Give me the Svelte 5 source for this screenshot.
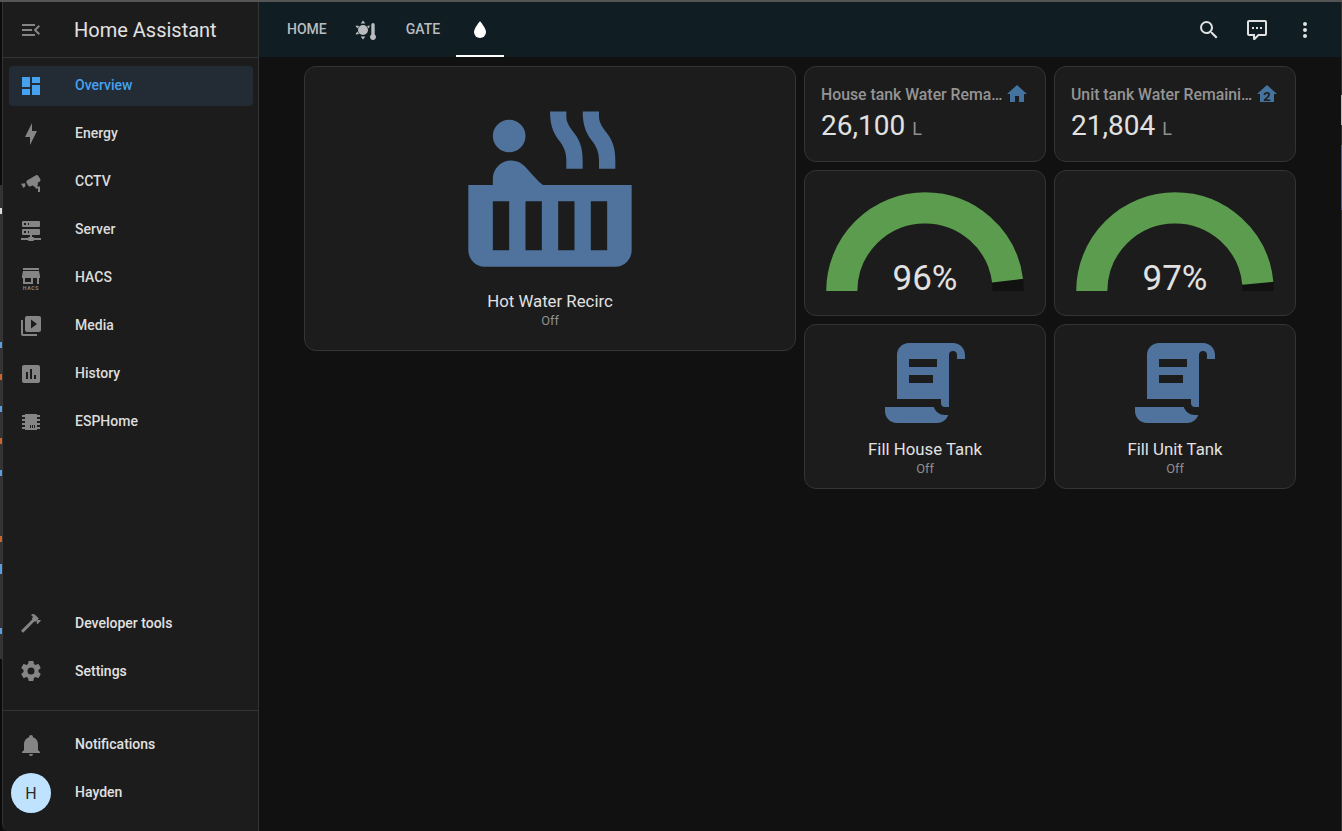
<script lang="ts">
	const icons: Record<string, string> = {
		menuOpen: "M21,15.61L19.59,17L14.58,12L19.59,7L21,8.39L17.44,12L21,15.61M3,6H16V8H3V6M3,13V11H13V13H3M3,18V16H16V18H3Z",
		dashboard: "M13,3V9H21V3M13,21H21V11H13M3,21H11V15H3M3,13H11V3H3V13Z",
		bolt: "M11 15H6L13 1V9H18L11 23V15Z",
		cctv: "M18.15,4.94C17.77,4.91 17.37,5 17,5.2L8.35,10.2C7.39,10.76 7.07,12 7.62,12.94L9.12,15.54C9.67,16.5 10.89,16.82 11.85,16.27L13.65,15.23C13.92,15.71 14.32,16.11 14.81,16.38C15.28,16.65 15.81,16.8 16.35,16.8V18.5H19V22H21V16.5H18.35V15.65C19,14.85 19.12,13.7 18.67,12.77L20.47,11.73C21.43,11.17 21.75,9.95 21.2,9L19.7,6.4C19.3,5.71 18.6,5 18.15,4.94M6.22,13.17L2,13.71L2.75,15L4.5,18L6.35,16.27L6.22,13.17Z",
		server: "M13,19H14A1,1 0 0,1 15,20H22V22H15A1,1 0 0,1 14,23H10A1,1 0 0,1 9,22H2V20H9A1,1 0 0,1 10,19H11V17H4A1,1 0 0,1 3,16V12A1,1 0 0,1 4,11H20A1,1 0 0,1 21,12V16A1,1 0 0,1 20,17H13V19M4,3H20A1,1 0 0,1 21,4V8A1,1 0 0,1 20,9H4A1,1 0 0,1 3,8V4A1,1 0 0,1 4,3M9,7H10V5H9V7M9,15H10V13H9V15M5,5V7H7V5H5M5,13V15H7V13H5Z",
		media: "M4,6H2V20A2,2 0 0,0 4,22H18V20H4V6M22,4A2,2 0 0,0 20,2H8A2,2 0 0,0 6,4V16A2,2 0 0,0 8,18H20A2,2 0 0,0 22,16V4M12,14.5V5.5L18,10L12,14.5Z",
		chart: "M19 3H5C3.9 3 3 3.9 3 5V19C3 20.1 3.9 21 5 21H19C20.1 21 21 20.1 21 19V5C21 3.9 20.1 3 19 3M9 17H7V10H9V17M13 17H11V7H13V17M17 17H15V13H17V17Z",
		chip: "M6,4H18V5H21V7H18V9H21V11H18V13H21V15H18V17H21V19H18V20H6V19H3V17H6V15H3V13H6V11H3V9H6V7H3V5H6V4M11,15V18H12V15H11M13,15V18H14V15H13M15,15V18H16V15H15Z",
		hammer: "M2 19.63L13.43 8.2L12.72 7.5L14.14 6.07L12 3.89C13.2 2.7 15.09 2.7 16.27 3.89L19.87 7.5L18.45 8.91H21.29L22 9.62L18.45 13.21L17.74 12.5V9.62L16.27 11.04L15.56 10.33L4.13 21.76L2 19.63Z",
		cog: "M12,15.5A3.5,3.5 0 0,1 8.5,12A3.5,3.5 0 0,1 12,8.5A3.5,3.5 0 0,1 15.5,12A3.5,3.5 0 0,1 12,15.5M19.43,12.97C19.47,12.65 19.5,12.33 19.5,12C19.5,11.67 19.47,11.34 19.43,11L21.54,9.37C21.73,9.22 21.78,8.95 21.66,8.73L19.66,5.27C19.54,5.05 19.27,4.96 19.05,5.05L16.56,6.05C16.04,5.66 15.5,5.32 14.87,5.07L14.5,2.42C14.46,2.18 14.25,2 14,2H10C9.75,2 9.54,2.18 9.5,2.42L9.13,5.07C8.5,5.32 7.96,5.66 7.44,6.05L4.95,5.05C4.73,4.96 4.46,5.05 4.34,5.27L2.34,8.73C2.21,8.95 2.27,9.22 2.46,9.37L4.57,11C4.53,11.34 4.5,11.67 4.5,12C4.5,12.33 4.53,12.65 4.57,12.97L2.46,14.63C2.27,14.78 2.21,15.05 2.34,15.27L4.34,18.73C4.46,18.95 4.73,19.03 4.95,18.95L7.44,17.94C7.96,18.34 8.5,18.68 9.13,18.93L9.5,21.58C9.54,21.82 9.75,22 10,22H14C14.25,22 14.46,21.82 14.5,21.58L14.87,18.93C15.5,18.67 16.04,18.34 16.56,17.94L19.05,18.95C19.27,19.03 19.54,18.95 19.66,18.73L21.66,15.27C21.78,15.05 21.73,14.78 21.54,14.63L19.43,12.97Z",
		bell: "M21,19V20H3V19L5,17V11C5,7.9 7.03,5.17 10,4.29C10,4.19 10,4.1 10,4A2,2 0 0,1 12,2A2,2 0 0,1 14,4C14,4.1 14,4.19 14,4.29C16.97,5.17 19,7.9 19,11V17L21,19M14,21A2,2 0 0,1 12,23A2,2 0 0,1 10,21",
		store: "M12,18H6V14H12M21,14V12L20,7H4L3,12V14H4V20H14V14H18V20H20V14M20,4H4V6H20V4Z",
		magnify: "M9.5,3A6.5,6.5 0 0,1 16,9.5C16,11.11 15.41,12.59 14.44,13.73L14.71,14H15.5L20.5,19L19,20.5L14,15.5V14.71L13.73,14.44C12.59,15.41 11.11,16 9.5,16A6.5,6.5 0 0,1 3,9.5A6.5,6.5 0 0,1 9.5,3M9.5,5C7,5 5,7 5,9.5C5,12 7,14 9.5,14C12,14 14,12 14,9.5C14,7 12,5 9.5,5Z",
		comment: "M9,22A1,1 0 0,1 8,21V18H4A2,2 0 0,1 2,16V4C2,2.89 2.9,2 4,2H20A2,2 0 0,1 22,4V16A2,2 0 0,1 20,18H13.9L10.2,21.71C10,21.9 9.75,22 9.5,22V22H9M10,16V19.08L13.08,16H20V4H4V16H10M17,11H15V9H17V11M13,11H11V9H13V11M9,11H7V9H9V11Z",
		dots: "M12,16A2,2 0 0,1 14,18A2,2 0 0,1 12,20A2,2 0 0,1 10,18A2,2 0 0,1 12,16M12,10A2,2 0 0,1 14,12A2,2 0 0,1 12,14A2,2 0 0,1 10,12A2,2 0 0,1 12,10M12,4A2,2 0 0,1 14,6A2,2 0 0,1 12,8A2,2 0 0,1 10,6A2,2 0 0,1 12,4Z",
		water: "M12,20A6,6 0 0,1 6,14C6,10 12,3.25 12,3.25C12,3.25 18,10 18,14A6,6 0 0,1 12,20Z",
		sunTemp: "M9 7A5 5 0 1 0 9 17A5 5 0 1 0 9 7ZM9 2.5L11.3 5.6H6.7ZM9 21.5L6.7 18.4H11.3ZM1.5 7.5L5.3 8L3.2 10.5ZM1.5 16.5L3.2 13.5L5.3 16ZM13 8L15.8 7.5L14.8 10.5ZM19 5A1.7 1.7 0 0 1 20.7 6.7V16.5A3 3 0 1 1 17.3 16.5V6.7A1.7 1.7 0 0 1 19 5Z",
		hotTub: "M7,4A2,2 0 0,1 9,6A2,2 0 0,1 7,8A2,2 0 0,1 5,6A2,2 0 0,1 7,4M5,12V11.25C5,10 6,9 7.25,9H7.28C7.9,9 8.5,9.25 8.93,9.73L10.33,11.28C10.58,11.56 10.84,11.8 11.15,12H22V20A2,2 0 0,1 20,22H4A2,2 0 0,1 2,20V12H5M7,20V14H5V20H7M11,20V14H9V20H11M15,20V14H13V20H15M19,20V14H17V20H19M12,3H14V3.6C14,4.4 14.5,5 15,5.7C15.7,6.6 16,7.6 16,9V10H14V9C14,8 13.7,7.4 13.3,6.8C12.6,5.9 12,5 12,3ZM16,3H18V3.6C18,4.4 18.5,5 19,5.7C19.7,6.6 20,7.6 20,9V10H18V9C18,8 17.7,7.4 17.3,6.8C16.6,5.9 16,5 16,3Z",
		script: "M17.8,20C17.4,21.2 16.3,22 15,22H5C3.3,22 2,20.7 2,19V18H5L14.2,18C14.6,19.2 15.7,20 17,20H17.8M19,2C20.7,2 22,3.3 22,5V6H20V5C20,4.4 19.6,4 19,4C18.4,4 18,4.4 18,5V18H17C16.4,18 16,17.6 16,17V16H5V5C5,3.3 6.3,2 8,2H19M8,6V8H15V6H8M8,10V12H14V10H8Z",
		home: "M10,20V14H14V20H19V12H22L12,3L2,12H5V20H10Z",
		homeTwo: "M12,3L2,12H5V20H19V12H22L12,3Z",
	};

	const mainNav = [
		{ label: "Overview", icon: "dashboard", active: true },
		{ label: "Energy", icon: "bolt" },
		{ label: "CCTV", icon: "cctv" },
		{ label: "Server", icon: "server" },
		{ label: "HACS", icon: "store", hacs: true },
		{ label: "Media", icon: "media" },
		{ label: "History", icon: "chart" },
		{ label: "ESPHome", icon: "chip" },
	];

	const tanks = [
		{ name: "House tank Water Remaining", value: "26,100", icon: "home", level: 96 },
		{ name: "Unit tank Water Remaining", value: "21,804", icon: "homeTwo", level: 97 },
	];

	const fills = ["Fill House Tank", "Fill Unit Tank"];
</script>

<div class="window">
	<div class="edge-left"></div>
	<aside class="sidebar">
		<div class="brand">
			<svg class="icon" viewBox="0 0 24 24"><path d={icons.menuOpen} /></svg>
			<span>Home Assistant</span>
		</div>
		<nav class="main-nav">
			{#each mainNav as item}
				<div class="nav-row" class:active={item.active}>
					<svg class="icon" viewBox="0 0 24 24">
						{#if item.hacs}
							<path transform="translate(0 -2)" d={icons[item.icon]} />
							<text x="12" y="23.6" text-anchor="middle" class="hacs-text">HACS</text>
						{:else}
							<path d={icons[item.icon]} />
						{/if}
					</svg>
					<span>{item.label}</span>
				</div>
			{/each}
		</nav>
		<div class="nav-row bright tool">
			<svg class="icon" viewBox="0 0 24 24"><path d={icons.hammer} /></svg>
			<span>Developer tools</span>
		</div>
		<div class="nav-row bright tool">
			<svg class="icon" viewBox="0 0 24 24"><path d={icons.cog} /></svg>
			<span>Settings</span>
		</div>
		<div class="foot">
			<div class="nav-row bright">
				<svg class="icon" viewBox="0 0 24 24"><path d={icons.bell} /></svg>
				<span>Notifications</span>
			</div>
			<div class="nav-row bright">
				<div class="avatar">H</div>
				<span>Hayden</span>
			</div>
		</div>
	</aside>

	<div class="main">
		<header class="topbar">
			<div class="tab">HOME</div>
			<div class="tab icon-tab">
				<svg viewBox="0 0 24 24"><path d={icons.sunTemp} /></svg>
			</div>
			<div class="tab gate">GATE</div>
			<div class="tab icon-tab selected">
				<svg viewBox="0 0 24 24"><path d={icons.water} /></svg>
			</div>
			<div class="actions">
				<svg viewBox="0 0 24 24"><path d={icons.magnify} /></svg>
				<svg viewBox="0 0 24 24"><path d={icons.comment} /></svg>
				<svg viewBox="0 0 24 24"><path d={icons.dots} /></svg>
			</div>
		</header>

		<div class="view">
			<section class="card tub">
				<svg viewBox="0 0 24 24"><path d={icons.hotTub} /></svg>
				<div class="name">Hot Water Recirc</div>
				<div class="state">Off</div>
			</section>

			<div class="tank-grid">
				{#each tanks as tank}
					<section class="card sensor">
						<div class="sensor-head">
							<span class="sensor-name">{tank.name}</span>
							<svg viewBox="0 0 24 24">
								<path d={icons[tank.icon]} />
								{#if tank.icon === "homeTwo"}
									<text x="12" y="18.8" text-anchor="middle" class="floor">2</text>
								{/if}
							</svg>
						</div>
						<div class="reading">{tank.value}<span class="unit">L</span></div>
					</section>
				{/each}
				{#each tanks as tank}
					<section class="card gauge">
						<svg viewBox="-50 -50 100 50">
							<path class="track" d="M -40 0 A 40 40 0 0 1 40 0" />
							<path
								class="level"
								d="M -40 0 A 40 40 0 0 1 40 0"
								pathLength="100"
								stroke-dasharray="{tank.level} 100"
							/>
						</svg>
						<div class="percent">{tank.level}%</div>
					</section>
				{/each}
				{#each fills as fill}
					<section class="card fill">
						<svg viewBox="0 0 24 24"><path d={icons.script} /></svg>
						<div class="name">{fill}</div>
						<div class="state">Off</div>
					</section>
				{/each}
			</div>
		</div>
	</div>
	<div class="edge-right"></div>
</div>

<style>
	:global(body) {
		background: #111;
		overflow: hidden;
	}
	.window {
		display: flex;
		height: 831px;
		box-sizing: border-box;
		border-top: 2px solid #555;
		background: #111;
		font-family: Roboto, sans-serif;
		color: #e1e1e1;
	}
	/* slivers of the windows behind this one */
	.edge-left {
		width: 2px;
		flex: none;
		background: linear-gradient(
			#0b0b0b 0 183px,
			#333 183px 206px,
			#ddd 206px 212px,
			#333 212px 340px,
			#5aa0e0 340px 346px,
			#333 346px 372px,
			#c8662c 372px 378px,
			#333 378px 404px,
			#5aa0e0 404px 410px,
			#333 410px 436px,
			#c8662c 436px 442px,
			#333 442px 468px,
			#5aa0e0 468px 474px,
			#333 474px 534px,
			#c8662c 534px 540px,
			#333 540px 562px,
			#5aa0e0 562px 572px,
			#333 572px 626px,
			#5aa0e0 626px 632px,
			#333 632px 657px,
			#0b0b0b 657px
		);
	}
	.edge-right {
		width: 1px;
		flex: none;
		background: linear-gradient(
			#333 0 93px,
			#bbb 93px 123px,
			#333 123px 143px,
			#565a8c 143px 208px,
			#333 208px
		);
	}
	.sidebar {
		width: 257px;
		flex: none;
		display: flex;
		flex-direction: column;
		box-sizing: border-box;
		background: #1c1c1c;
		border-left: 1px solid #343434;
		border-right: 1px solid #343434;
		border-bottom-left-radius: 8px;
	}
	.icon {
		width: 24px;
		height: 24px;
		flex: none;
		fill: #858585;
	}
	.brand {
		display: flex;
		align-items: center;
		height: 55px;
		flex: none;
		padding-left: 16px;
		gap: 31px;
		border-bottom: 1px solid #343434;
		font-size: 20px;
	}
	.main-nav {
		flex: 1;
		padding-top: 4px;
		display: flex;
		flex-direction: column;
	}
	.nav-row {
		display: flex;
		align-items: center;
		height: 40px;
		flex: none;
		margin: 4px 5px 4px 6px;
		padding-left: 10px;
		gap: 32px;
		border-radius: 4px;
		font-size: 14px;
		font-weight: 500;
		color: #dcdcdc;
	}
	.nav-row span {
		padding-bottom: 2px;
	}
	.nav-row.tool span {
		padding-bottom: 0;
	}
	.nav-row.bright {
		color: #e1e1e1;
	}
	.nav-row.active {
		background: #232c35;
		color: #46a1f0;
	}
	.nav-row.active .icon {
		fill: #46a1f0;
	}
	.hacs-text {
		font-size: 5.2px;
		font-weight: 700;
		letter-spacing: 0.7px;
	}
	.foot {
		display: flex;
		flex-direction: column;
		margin-top: 15px;
		padding-top: 10px;
		padding-bottom: 14px;
		border-top: 1px solid #343434;
	}
	.avatar {
		width: 40px;
		height: 40px;
		flex: none;
		margin: 0 -8px;
		border-radius: 50%;
		background: #bfe3ff;
		color: #2a2a2a;
		display: flex;
		align-items: center;
		justify-content: center;
		font-size: 16px;
		font-weight: 400;
	}
	.main {
		flex: 1;
		min-width: 0;
	}
	.topbar {
		display: flex;
		align-items: stretch;
		height: 55px;
		padding-left: 12px;
		background: #101e24;
		color: #b9bdbf;
	}
	.tab {
		display: flex;
		align-items: center;
		justify-content: center;
		padding: 0 15px 0 16px;
		font-size: 14px;
		font-weight: 500;
		box-sizing: border-box;
		border-bottom: 2px solid transparent;
	}
	.tab.gate {
		padding-right: 16px;
	}
	.icon-tab {
		width: 48px;
		padding: 2px 0 0;
	}
	.tab svg {
		width: 24px;
		height: 24px;
		flex: none;
		fill: #b9bdbf;
	}
	.tab.selected {
		border-bottom-color: #fff;
	}
	.tab.selected svg {
		fill: #fff;
	}
	.actions {
		margin-left: auto;
		display: flex;
		align-items: center;
		gap: 24px;
		padding-right: 24px;
	}
	.actions svg {
		width: 24px;
		height: 24px;
		fill: #e1e1e1;
	}
	.view {
		display: flex;
		align-items: flex-start;
		gap: 8px;
		padding: 9px 0 0 45px;
	}
	.card {
		box-sizing: border-box;
		background: #1c1c1c;
		border: 1px solid #343434;
		border-radius: 12px;
	}
	.tub {
		width: 492px;
		height: 285px;
		display: flex;
		flex-direction: column;
		align-items: center;
	}
	.tub svg {
		width: 196px;
		height: 196px;
		margin-top: 20px;
		fill: #4f739c;
		flex: none;
	}
	.name {
		font-size: 16.8px;
		text-align: center;
		line-height: 20px;
	}
	.state {
		font-size: 12.8px;
		line-height: 16px;
		margin-top: 2px;
		color: #8f8f8f;
		text-align: center;
	}
	.tub .name {
		margin-top: 8px;
	}
	.tank-grid {
		display: grid;
		grid-template-columns: 242px 242px;
		grid-template-rows: 96px 146px 165px;
		gap: 8px;
	}
	.sensor {
		padding: 15px 16px 0;
	}
	.sensor-head {
		display: flex;
		align-items: center;
		height: 24px;
	}
	.sensor-name {
		flex: 1;
		min-width: 0;
		white-space: nowrap;
		overflow: hidden;
		text-overflow: ellipsis;
		font-size: 15.8px;
		font-weight: 500;
		color: #949494;
	}
	.sensor-head svg {
		width: 24px;
		height: 24px;
		flex: none;
		fill: #44739e;
	}
	.floor {
		font-size: 13px;
		font-weight: 700;
		fill: #1c1c1c;
	}
	.reading {
		font-size: 28px;
		line-height: 36px;
		margin-top: 2px;
	}
	.unit {
		font-size: 18px;
		color: #8f8f8f;
		margin-left: 7px;
	}
	.gauge {
		position: relative;
		display: flex;
		justify-content: center;
		padding-top: 16px;
	}
	.gauge svg {
		width: 208px;
		height: 104px;
	}
	.track,
	.level {
		fill: none;
		stroke-width: 15;
	}
	.track {
		stroke: #111;
	}
	.level {
		stroke: #5c9c4e;
	}
	.percent {
		position: absolute;
		left: 0;
		right: 0;
		top: 88px;
		text-align: center;
		font-size: 35px;
		line-height: 40px;
	}
	.fill {
		display: flex;
		flex-direction: column;
		align-items: center;
	}
	.fill svg {
		width: 96px;
		height: 96px;
		margin-top: 10px;
		fill: #4f739c;
		flex: none;
	}
	.fill .name {
		margin-top: 8px;
	}
</style>
